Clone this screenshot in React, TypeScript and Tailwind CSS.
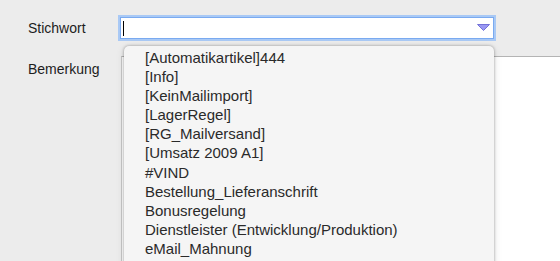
import React from "react";

const items = [
  "[Automatikartikel]444",
  "[Info]",
  "[KeinMailimport]",
  "[LagerRegel]",
  "[RG_Mailversand]",
  "[Umsatz 2009 A1]",
  "#VIND",
  "Bestellung_Lieferanschrift",
  "Bonusregelung",
  "Dienstleister (Entwicklung/Produktion)",
  "eMail_Mahnung",
];

export default function App() {
  return (
    <div
      className="relative w-[560px] h-[261px] overflow-hidden bg-[#ececec] text-[#1d1d1d]"
      style={{ fontFamily: '"Liberation Sans", Arial, sans-serif' }}
    >
      <div className="flex flex-col pt-[17px] h-full">
        <div className="flex items-center h-[22px]">
          <div className="w-[120px] pl-[28px] text-[14px]">Stichwort</div>
          <div className="relative w-[374px] h-[22px] bg-white border border-[#7aaaf0] shadow-[0_0_0_2px_#a9c9f5] flex items-center">
            <div className="ml-[2px] w-px h-[15px] bg-black" />
            <svg className="absolute right-[3px] top-[6px]" width="13" height="7" viewBox="0 0 13 7">
              <polygon points="0.5,0.5 12.5,0.5 6.5,6.5" fill="#9a98f2" stroke="#5d5bd0" strokeWidth="0.8" />
            </svg>
          </div>
        </div>
        <div className="flex flex-1 mt-[17px]">
          <div className="w-[121px] pl-[28px] pt-[3px] text-[14px]">Bemerkung</div>
          <div className="flex-1 bg-white border-t border-l border-t-[#b4b4b4] border-l-[#c8c8c8]" />
        </div>
      </div>
      <div className="absolute left-[124px] top-[46px] w-[370px] h-[230px] bg-[#f5f5f5] rounded-t-[5px] shadow-[0_0_3px_rgba(0,0,0,0.35),0_2px_8px_rgba(0,0,0,0.12)] pt-[1.5px]">
        {items.map((t) => (
          <div key={t} className="h-[19.2px] leading-[19.2px] pl-[21px] text-[15px] text-[#2a2a2a] whitespace-nowrap">
            {t}
          </div>
        ))}
      </div>
    </div>
  );
}
